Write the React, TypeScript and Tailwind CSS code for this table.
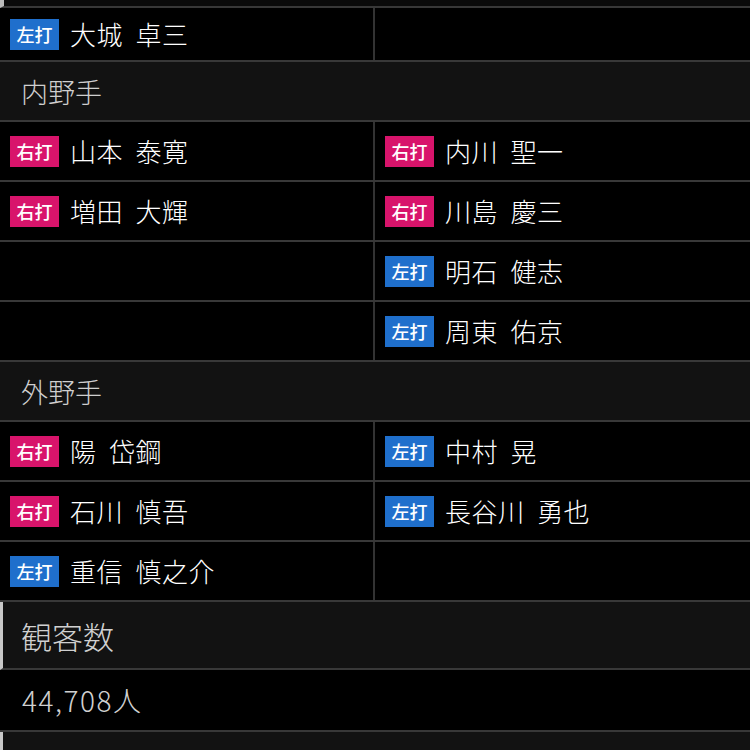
type Hand = 'L' | 'R';
type Player = { hand: Hand; name: string } | null;

const jp = { fontFamily: '"Noto Sans CJK JP", "Noto Sans", sans-serif' };

function Badge({ hand }: { hand: Hand }) {
  return (
    <span
      className={`flex items-center justify-center w-[49px] h-[31px] text-[18px] font-medium text-white leading-none ${
        hand === 'L' ? 'bg-[#1f6fcc]' : 'bg-[#d8146b]'
      }`}
    >
      {hand === 'L' ? '左打' : '右打'}
    </span>
  );
}

function Cell({ player, left }: { player: Player; left?: boolean }) {
  return (
    <div className={`flex items-center gap-[11px] pl-[10px] ${left ? 'border-r-2 border-[#333]' : ''}`}>
      {player && (
        <>
          <Badge hand={player.hand} />
          <span className="text-[26px] font-light text-white leading-none tracking-[0.5px] whitespace-pre">
            {player.name.replace(' ', '  ')}
          </span>
        </>
      )}
    </div>
  );
}

function PlayerRow({ a, b, h = 'h-[60px]' }: { a: Player; b: Player; h?: string }) {
  return (
    <div className={`grid grid-cols-2 ${h} border-b-2 border-[#383838] bg-black`}>
      <Cell player={a} left />
      <Cell player={b} />
    </div>
  );
}

function SectionHeader({ title }: { title: string }) {
  return (
    <div className="flex items-center h-[60px] pl-[21px] bg-[#121212] border-b-2 border-[#383838]">
      <span className="text-[27px] font-light text-[#cfcfcf] leading-none">{title}</span>
    </div>
  );
}

export default function App() {
  return (
    <div className="w-[750px] h-[750px] overflow-hidden bg-black" style={jp}>
      <div className="h-[8px] bg-[#0a0a0a] border-b-2 border-[#383838] border-l-[4px] border-l-[#bbb]" />
      <PlayerRow a={{ hand: 'L', name: '大城 卓三' }} b={null} h="h-[54px]" />
      <SectionHeader title="内野手" />
      <PlayerRow a={{ hand: 'R', name: '山本 泰寛' }} b={{ hand: 'R', name: '内川 聖一' }} />
      <PlayerRow a={{ hand: 'R', name: '増田 大輝' }} b={{ hand: 'R', name: '川島 慶三' }} />
      <PlayerRow a={null} b={{ hand: 'L', name: '明石 健志' }} />
      <PlayerRow a={null} b={{ hand: 'L', name: '周東 佑京' }} />
      <SectionHeader title="外野手" />
      <PlayerRow a={{ hand: 'R', name: '陽 岱鋼' }} b={{ hand: 'L', name: '中村 晃' }} />
      <PlayerRow a={{ hand: 'R', name: '石川 慎吾' }} b={{ hand: 'L', name: '長谷川 勇也' }} />
      <PlayerRow a={{ hand: 'L', name: '重信 慎之介' }} b={null} />
      <div className="flex items-center h-[68px] pl-[18px] bg-[#121212] border-l-[3px] border-[#c8c8c8] border-b-2 border-b-[#383838]">
        <span className="text-[31px] font-light text-[#d0d0d0] leading-none">観客数</span>
      </div>
      <div className="flex items-center h-[62px] pl-[22px] bg-black border-b-2 border-[#383838]">
        <span className="text-[28px] font-light text-[#d0d0d0] leading-none tracking-[1.5px]">44,708人</span>
      </div>
      <div className="h-[40px] bg-[#121212] border-l-[3px] border-[#c8c8c8]" />
    </div>
  );
}
